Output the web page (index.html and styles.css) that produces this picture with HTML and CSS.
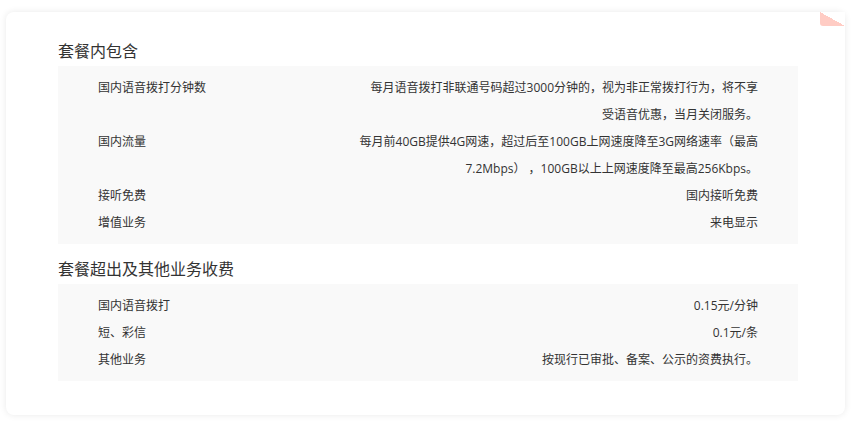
FILE: index.html
```html
<!DOCTYPE html>
<html lang="zh-CN">
<head>
<meta charset="utf-8">
<title>套餐详情</title>
<link rel="stylesheet" href="styles.css">
</head>
<body>
<div class="card">
  <section class="section">
    <h2 class="title">套餐内包含</h2>
    <div class="box">
      <div class="row">
        <span class="label">国内语音拨打分钟数</span>
        <span class="value">每月语音拨打非联通号码超过3000分钟的，视为非正常拨打行为，将不享<br>受语音优惠，当月关闭服务。</span>
      </div>
      <div class="row">
        <span class="label">国内流量</span>
        <span class="value">每月前40GB提供4G网速，超过后至100GB上网速度降至3G网络速率（最高<br>7.2Mbps） ，100GB以上上网速度降至最高256Kbps。</span>
      </div>
      <div class="row">
        <span class="label">接听免费</span>
        <span class="value">国内接听免费</span>
      </div>
      <div class="row">
        <span class="label">增值业务</span>
        <span class="value">来电显示</span>
      </div>
    </div>
  </section>
  <section class="section section-2">
    <h2 class="title">套餐超出及其他业务收费</h2>
    <div class="box">
      <div class="row">
        <span class="label">国内语音拨打</span>
        <span class="value">0.15元/分钟</span>
      </div>
      <div class="row">
        <span class="label">短、彩信</span>
        <span class="value">0.1元/条</span>
      </div>
      <div class="row">
        <span class="label">其他业务</span>
        <span class="value">按现行已审批、备案、公示的资费执行。</span>
      </div>
    </div>
  </section>
</div>
</body>
</html>
```
FILE: styles.css
```css
html, body {
  margin: 0;
  padding: 0;
  background: #fff;
}
body {
  font-family: "Open Sans", "Noto Sans CJK SC", sans-serif;
  color: #333;
  padding: 12px 13px 11px 6px;
}
.card {
  position: relative;
  box-sizing: border-box;
  width: 839px;
  height: 403px;
  background: #fff;
  border-radius: 8px;
  box-shadow: 0 0 7px rgba(0, 0, 0, 0.09);
  padding: 27px 47px 0 52px;
}
.card::after {
  content: "";
  position: absolute;
  top: 0;
  right: 0;
  width: 25px;
  height: 14px;
  background: linear-gradient(to bottom left, #fff 50%, #ffccc4 50%);
  border-bottom-left-radius: 3px;
}
.title {
  margin: 0 0 3px;
  font-size: 16px;
  line-height: 24px;
  font-weight: normal;
  color: #333;
}
.section-2 {
  margin-top: 13px;
}
.box {
  background: #f9f9f9;
  padding: 8px 40px;
}
.row {
  display: flex;
  justify-content: space-between;
  font-size: 12px;
  line-height: 27px;
}
.value {
  text-align: right;
  white-space: pre;
}
```
